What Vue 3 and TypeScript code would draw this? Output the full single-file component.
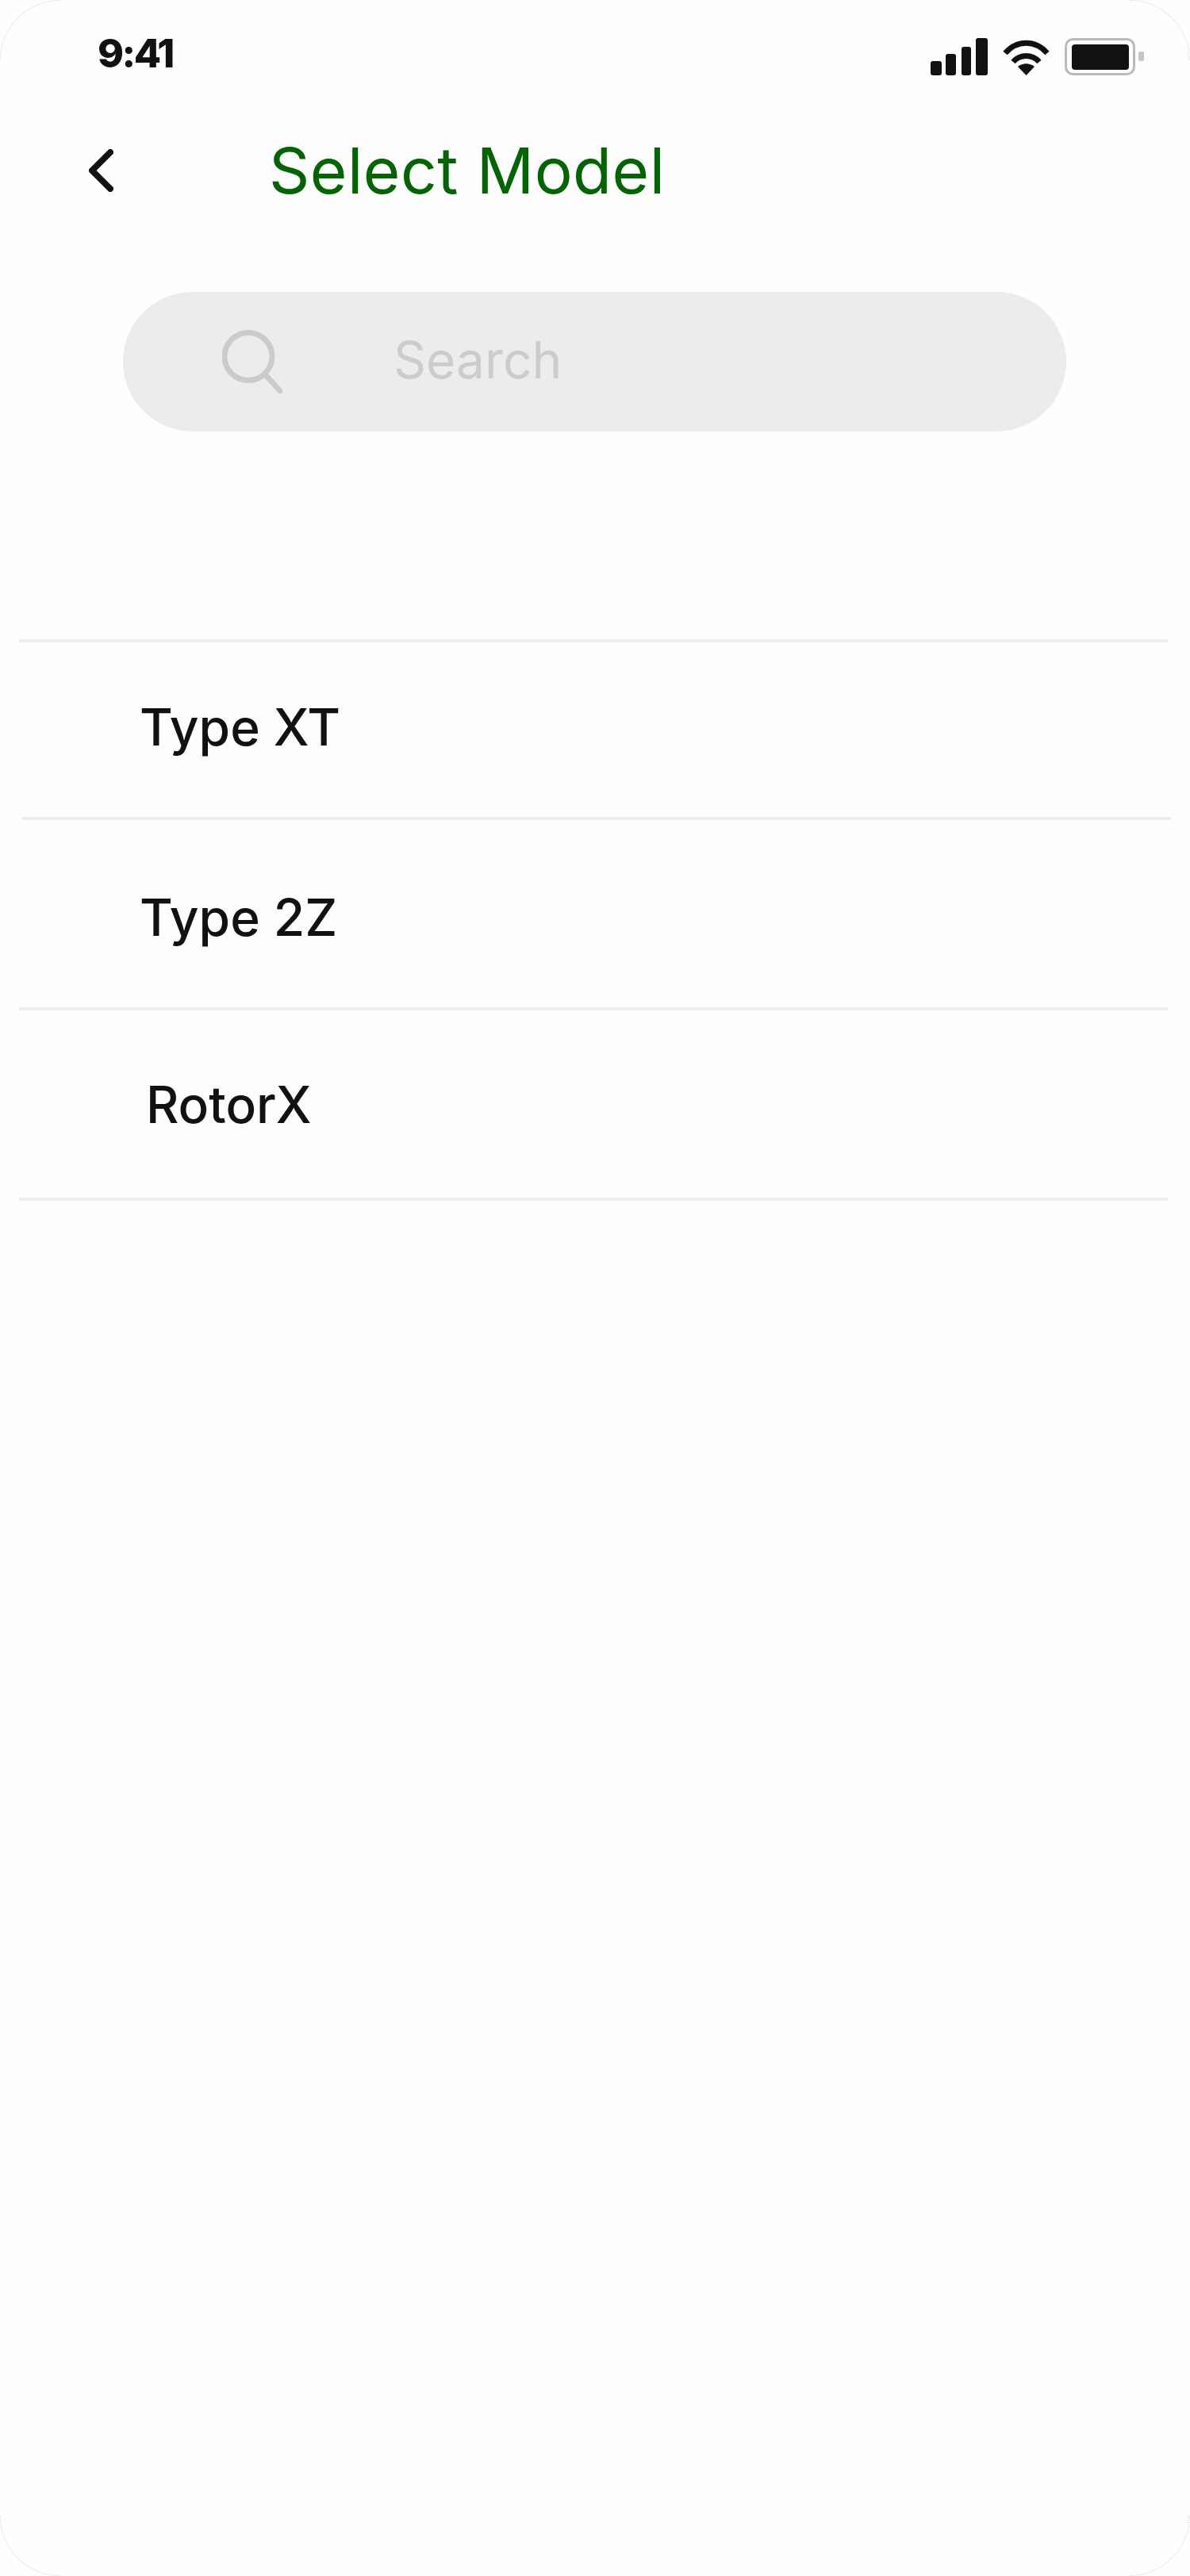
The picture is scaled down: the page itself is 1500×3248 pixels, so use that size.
<script setup lang="ts">
import { ref } from 'vue'

interface Model {
  id: number
  name: string
  cls: string
}

const models = ref<Model[]>([
  { id: 1, name: 'Type XT', cls: 'row-xt' },
  { id: 2, name: 'Type 2Z', cls: 'row-2z' },
  { id: 3, name: 'RotorX', cls: 'row-rotor' }
])
</script>

<template>
  <div class="phone">
    <span class="corner tl"></span>
    <span class="corner tr"></span>
    <span class="corner bl"></span>
    <span class="corner br"></span>

    <div class="status-bar">
      <span class="time">9:41</span>
      <div class="status-icons">
        <svg class="signal" width="72" height="47" viewBox="0 0 72 47" fill="#111">
          <rect x="0" y="29" width="14" height="18" rx="3" />
          <rect x="19" y="20" width="13" height="27" rx="3" />
          <rect x="39" y="11" width="12" height="36" rx="3" />
          <rect x="57" y="0" width="15" height="47" rx="3" />
        </svg>
        <svg class="wifi" width="61" height="47" viewBox="0 0 61 47" fill="none" stroke="#111" stroke-width="7">
          <path d="M4 19C19 2 42 2 57 19" />
          <path d="M14 30C23 20 38 20 47 30" />
          <path d="M20 36L30.500 47L41 36C34 31 27 31 20 36Z" fill="#111" stroke="none" />
        </svg>
        <svg class="battery" width="100" height="47" viewBox="0 0 100 47">
          <rect x="1.500" y="1.500" width="86" height="44" rx="9" fill="none" stroke="#b8bcb8" stroke-width="3" />
          <rect x="9" y="8" width="72" height="32" rx="4" fill="#111" />
          <rect x="93" y="17" width="7" height="12" rx="2" fill="#c4c8c4" />
        </svg>
      </div>
    </div>

    <header class="nav">
      <button class="back" aria-label="Back">
        <svg width="31" height="54" viewBox="0 0 31 54" fill="none" stroke="#111" stroke-width="8" stroke-linecap="round" stroke-linejoin="round">
          <path d="M27 4L4 27L27 50" />
        </svg>
      </button>
      <h1>Select Model</h1>
    </header>

    <div class="search">
      <svg class="search-icon" width="76" height="80" viewBox="0 0 76 80" fill="none" stroke="#cbcbcb" stroke-width="7">
        <circle cx="33" cy="33.500" r="30" />
        <path d="M54 56L73 77" stroke-linecap="round" />
      </svg>
      <span class="search-text">Search</span>
    </div>

    <ul class="models">
      <li v-for="model in models" :key="model.id" class="row" :class="model.cls">
        {{ model.name }}
      </li>
    </ul>
  </div>
</template>

<style>
html,
body {
  margin: 0;
  background: #fff;
}
</style>

<style scoped>
.phone {
  position: relative;
  width: 1500px;
  height: 3248px;
  box-sizing: border-box;
  overflow: hidden;
  background: #fefefe;
  font-family: Inter, "Liberation Sans", sans-serif;
  color: #111;
}

.corner {
  position: absolute;
  width: 76px;
  height: 76px;
  box-sizing: border-box;
  border: 0 dotted #d4d4d4;
}

.corner.tl {
  top: 0;
  left: 0;
  border-top-width: 1px;
  border-left-width: 1px;
  border-top-left-radius: 76px;
}

.corner.tr {
  top: 0;
  right: 0;
  border-top-width: 1px;
  border-right-width: 1px;
  border-top-right-radius: 76px;
}

.corner.bl {
  bottom: 0;
  left: 0;
  border-bottom-width: 1px;
  border-left-width: 1px;
  border-bottom-left-radius: 76px;
}

.corner.br {
  bottom: 0;
  right: 0;
  border-bottom-width: 1px;
  border-right-width: 1px;
  border-bottom-right-radius: 76px;
}

.status-bar {
  display: flex;
  justify-content: space-between;
  align-items: flex-start;
  height: 95px;
  padding: 48px 58px 0 123px;
  box-sizing: border-box;
}

.time {
  font-size: 50px;
  font-weight: 800;
  line-height: 38px;
  letter-spacing: -2.500px;
}

.status-icons {
  display: flex;
  align-items: flex-start;
  gap: 18px;
}

.signal,
.wifi,
.battery {
  display: block;
}

.nav {
  display: flex;
  align-items: center;
  height: 100px;
  margin-top: 70px;
  padding-left: 112px;
}

.back {
  display: flex;
  padding: 0;
  border: none;
  background: none;
}

h1 {
  margin: 0 0 0 196px;
  font-size: 80px;
  font-weight: 400;
  line-height: 100px;
  letter-spacing: 0.500px;
  color: #006400;
}

.search {
  display: flex;
  align-items: center;
  width: 1189px;
  height: 176px;
  margin: 103px 0 0 155px;
  padding-left: 125px;
  box-sizing: border-box;
  border-radius: 88px;
  background: #ececec;
}

.search-icon {
  display: block;
  flex: none;
}

.search-text {
  margin-left: 140px;
  padding-bottom: 5px;
  font-size: 64px;
  line-height: 80px;
  color: #cccccc;
}

.models {
  margin: 262px 0 0;
  padding: 0;
  list-style: none;
  font-size: 64px;
  font-weight: 500;
  line-height: 80px;
}

.row {
  margin-left: 24px;
  width: 1448px;
  border-top: 4px solid #eeeeee;
  padding-left: 152px;
  box-sizing: border-box;
}

.row:last-child {
  border-bottom: 4px solid #eeeeee;
}

.row-xt {
  height: 224px;
  padding-top: 67px;
}

.row-2z {
  height: 240px;
  margin-left: 28px;
  padding-left: 148px;
  padding-top: 83px;
}

.row-rotor {
  height: 244px;
  padding-top: 79px;
  padding-left: 160px;
}
</style>
